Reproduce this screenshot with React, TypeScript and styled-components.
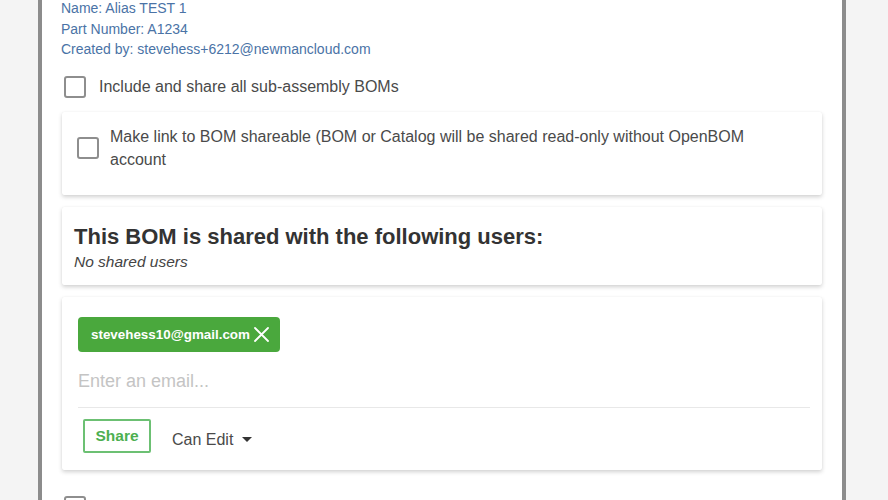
import React from "react";
import styled, { createGlobalStyle } from "styled-components";

const GlobalStyle = createGlobalStyle`
  html, body {
    margin: 0;
    padding: 0;
    background: #f4f4f4;
    font-family: "Liberation Sans", Arial, sans-serif;
    overflow: hidden;
  }
`;

const Page = styled.div`
  display: flex;
  height: 500px;
  padding-left: 38px;
`;

const Panel = styled.div`
  width: 760px;
  height: 100%;
  background: #ffffff;
  border-left: 4px solid #8c8c8c;
  border-right: 4px solid #8c8c8c;
  padding: 0 20px;
  overflow: hidden;
`;

const Meta = styled.div`
  margin-top: -2px;
  margin-left: -1px;
`;

const MetaLine = styled.div`
  font-size: 14px;
  line-height: 20.5px;
  color: #4a73a6;
`;

const CheckRow = styled.label<{ $gap: number }>`
  display: flex;
  align-items: center;
  gap: 13px;
  margin-top: ${({ $gap }) => $gap}px;
  padding-left: 2px;
`;

const Box = styled.span`
  flex: none;
  display: block;
  width: 18px;
  height: 18px;
  border: 2px solid #8e8e8e;
  border-radius: 3px;
  background: #fff;
`;

const RowText = styled.span`
  font-size: 16px;
  color: #4a4a4a;
`;

const Card = styled.div<{ $pad: string; $gap: number }>`
  margin-top: ${({ $gap }) => $gap}px;
  background: #ffffff;
  border-radius: 2px;
  box-shadow: 0 2px 4px rgba(0, 0, 0, 0.18), 0 0 1px rgba(0, 0, 0, 0.08);
  padding: ${({ $pad }) => $pad};
`;

const CardRow = styled.div`
  display: flex;
  align-items: center;
  gap: 11px;
`;

const CardText = styled.div`
  font-size: 16px;
  line-height: 23px;
  color: #4a4a4a;
`;

const Heading = styled.div`
  font-size: 22px;
  font-weight: bold;
  line-height: 26px;
  color: #333333;
`;

const SubNote = styled.div`
  font-size: 15.5px;
  font-style: italic;
  line-height: 18px;
  margin-top: 3px;
  color: #444444;
`;

const Chip = styled.span`
  display: inline-flex;
  align-items: center;
  gap: 3px;
  height: 35px;
  padding: 0 10px 0 13px;
  background: #4aa83d;
  border-radius: 4px;
  color: #ffffff;
  font-size: 13.4px;
  font-weight: bold;
  box-sizing: border-box;
`;

const Field = styled.div`
  margin-top: 6px;
  padding: 13px 0 16px;
  border-bottom: 1px solid #e8e8e8;
  font-size: 18px;
  line-height: 20px;
  color: #c4c4c4;
`;

const Actions = styled.div`
  display: flex;
  align-items: center;
  gap: 21px;
  margin-top: 11px;
  padding-left: 5px;
`;

const ShareButton = styled.button`
  width: 68px;
  height: 34px;
  border: 2px solid #6cc073;
  border-radius: 2px;
  background: #ffffff;
  color: #4caf50;
  font-family: inherit;
  font-size: 15.5px;
  font-weight: bold;
  padding: 0;
`;

const Dropdown = styled.span`
  display: inline-flex;
  align-items: center;
  gap: 9px;
  font-size: 16px;
  color: #4a4a4a;
  margin-top: 8px;
`;

const Caret = styled.span`
  width: 0;
  height: 0;
  border-left: 5px solid transparent;
  border-right: 5px solid transparent;
  border-top: 5px solid #333;
`;

const CloseIcon = () => (
  <svg width="17" height="17" viewBox="0 0 17 17" fill="none" stroke="#ffffff" strokeWidth="1.8" strokeLinecap="round">
    <path d="M2 2 L15 15 M15 2 L2 15" />
  </svg>
);

export default function App() {
  return (
    <>
      <GlobalStyle />
      <Page>
        <Panel>
          <Meta>
            <MetaLine>Name: Alias TEST 1</MetaLine>
            <MetaLine>Part Number: A1234</MetaLine>
            <MetaLine>Created by: stevehess+6212@newmancloud.com</MetaLine>
          </Meta>
          <CheckRow $gap={16}>
            <Box />
            <RowText>Include and share all sub-assembly BOMs</RowText>
          </CheckRow>
          <Card $gap={14} $pad="13px 40px 24px 15px">
            <CardRow>
              <Box />
              <CardText>
                Make link to BOM shareable (BOM or Catalog will be shared read-only without OpenBOM account
              </CardText>
            </CardRow>
          </Card>
          <Card $gap={12} $pad="17px 12px 14px 12px">
            <Heading>This BOM is shared with the following users:</Heading>
            <SubNote>No shared users</SubNote>
          </Card>
          <Card $gap={12} $pad="20px 12px 17px 16px">
            <Chip>
              stevehess10@gmail.com
              <CloseIcon />
            </Chip>
            <Field>Enter an email...</Field>
            <Actions>
              <ShareButton>Share</ShareButton>
              <Dropdown>
                Can Edit
                <Caret />
              </Dropdown>
            </Actions>
          </Card>
          <CheckRow $gap={26}>
            <Box />
          </CheckRow>
        </Panel>
      </Page>
    </>
  );
}
